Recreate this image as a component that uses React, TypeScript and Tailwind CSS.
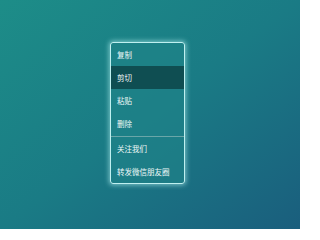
export default function App() {
  const rows1 = ["复制", "剪切", "粘贴", "删除"];
  const rows2 = ["关注我们", "转发微信朋友圈"];
  return (
    <div
      className="w-[300px] h-[229px] flex justify-center bg-gradient-to-br from-[#1d8d88] via-[#1a7b85] to-[#1a5e7d] pt-[42px] pr-[5px]"
      style={{ fontFamily: '"Noto Sans CJK SC", "Noto Sans", sans-serif' }}
    >
      <div className="w-[75px] h-[142px] rounded-[3px] border border-[#bff0f0] shadow-[0_0_5px_1px_rgba(190,250,250,0.6)] bg-[#1f8488]/60 flex flex-col text-[7.5px] leading-none text-[#eef8f8] overflow-hidden">
        {rows1.map((t, i) => (
          <div
            key={t}
            className={`h-[23.6px] flex items-center pl-[6px] ${i === 1 ? "bg-[#0f4e52]" : ""}`}
          >
            {t}
          </div>
        ))}
        <div className="h-px bg-[#6aa6a8]" />
        {rows2.map((t) => (
          <div key={t} className="h-[23.6px] flex items-center pl-[6px]">
            {t}
          </div>
        ))}
      </div>
    </div>
  );
}
